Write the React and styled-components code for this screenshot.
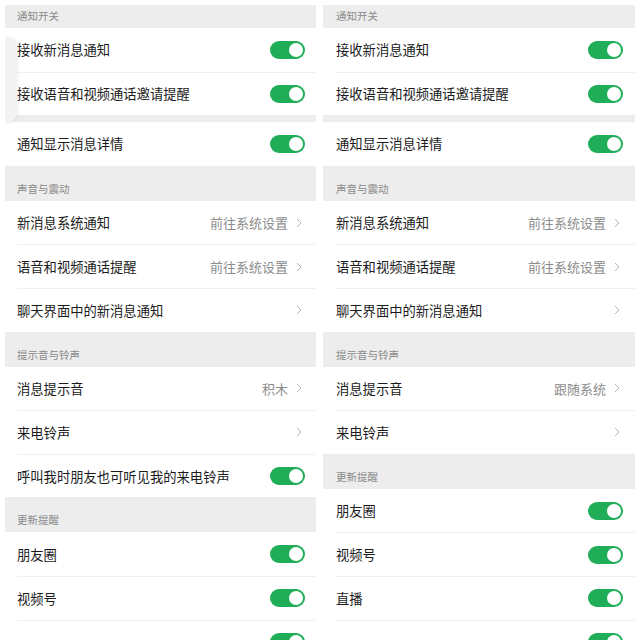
import React from "react";
import styled, { createGlobalStyle } from "styled-components";

const GlobalStyle = createGlobalStyle`
  html, body {
    margin: 0;
    padding: 0;
    background: #ffffff;
    font-family: "Noto Sans CJK SC", "Noto Sans", sans-serif;
  }
`;

const Page = styled.div`
  width: 640px;
  height: 640px;
  overflow: hidden;
  box-sizing: border-box;
  padding: 5px 5px 0 5px;
  display: grid;
  grid-template-columns: 311px 312px;
  column-gap: 7px;
  background: #ffffff;
`;

const Panel = styled.div`
  position: relative;
  display: flex;
  flex-direction: column;
  background: #ededed;
  overflow: hidden;
  height: 635px;
`;

const SectionHeader = styled.div`
  height: ${(p) => (p.$first ? 23 : 35)}px;
  flex-shrink: 0;
  box-sizing: border-box;
  display: flex;
  align-items: flex-end;
  padding: 0 0 5px ${(p) => p.$pad}px;
  font-size: 10.5px;
  color: #8a8a8a;
  line-height: 14px;
`;

const Gap = styled.div`
  height: 7px;
  flex-shrink: 0;
`;

const Group = styled.div`
  background: #ffffff;
  display: flex;
  flex-direction: column;
  flex-shrink: 0;
`;

const Row = styled.div`
  height: 43.6px;
  box-sizing: border-box;
  display: flex;
  align-items: center;
  margin-left: ${(p) => p.$pad}px;
  padding-right: ${(p) => p.$right}px;
  border-top: ${(p) => (p.$divider ? "1px solid #f0f0f0" : "none")};
`;

const Label = styled.span`
  flex: 1;
  font-size: 13.3px;
  color: #1b1b1b;
  white-space: nowrap;
`;

const Value = styled.span`
  font-size: 13px;
  color: #8c8c8c;
  margin-right: 8px;
`;

const Toggle = styled.div`
  position: relative;
  width: 35px;
  height: 18px;
  border-radius: 9px;
  background: #1fae57;
  &::after {
    content: "";
    position: absolute;
    right: 2px;
    top: 2px;
    width: 14px;
    height: 14px;
    border-radius: 50%;
    background: #ffffff;
  }
`;

const Chevron = styled.svg`
  width: 6px;
  height: 10px;
  margin-right: 3px;
  flex-shrink: 0;
`;

const BackHint = styled.div`
  position: absolute;
  left: 0;
  top: 32px;
  width: 12px;
  height: 86px;
  background: #f3f3f3;
  border-radius: 0 10px 10px 0;
  box-shadow: 1px 0 3px rgba(0, 0, 0, 0.08);
`;

const Arrow = () => (
  <Chevron viewBox="0 0 6 10">
    <polyline points="1,1 5,5 1,9" fill="none" stroke="#b5b5b5" strokeWidth="1" />
  </Chevron>
);

const Item = ({ label, value, toggle, arrow, divider, pad, right }) => (
  <Row $divider={divider} $pad={pad} $right={right}>
    <Label>{label}</Label>
    {value && <Value>{value}</Value>}
    {arrow && <Arrow />}
    {toggle && <Toggle />}
  </Row>
);

const renderGroup = (items, pad, right) => (
  <Group>
    {items.map((it, i) => (
      <Item key={i} {...it} divider={i > 0} pad={pad} right={right} />
    ))}
  </Group>
);

const SettingsPanel = ({ sections, pad, right, backHint }) => (
  <Panel>
    {sections.map((s, i) => (
      <React.Fragment key={i}>
        {s.title ? (
          <SectionHeader $first={i === 0} $pad={pad}>{s.title}</SectionHeader>
        ) : (
          <Gap />
        )}
        {renderGroup(s.items, pad, right)}
      </React.Fragment>
    ))}
    {backHint && <BackHint />}
  </Panel>
);

const notify = [
  {
    title: "通知开关",
    items: [
      { label: "接收新消息通知", toggle: true },
      { label: "接收语音和视频通话邀请提醒", toggle: true },
    ],
  },
  { title: null, items: [{ label: "通知显示消息详情", toggle: true }] },
  {
    title: "声音与震动",
    items: [
      { label: "新消息系统通知", value: "前往系统设置", arrow: true },
      { label: "语音和视频通话提醒", value: "前往系统设置", arrow: true },
      { label: "聊天界面中的新消息通知", arrow: true },
    ],
  },
];

const leftSections = [
  ...notify,
  {
    title: "提示音与铃声",
    items: [
      { label: "消息提示音", value: "积木", arrow: true },
      { label: "来电铃声", arrow: true },
      { label: "呼叫我时朋友也可听见我的来电铃声", toggle: true },
    ],
  },
  {
    title: "更新提醒",
    items: [
      { label: "朋友圈", toggle: true },
      { label: "视频号", toggle: true },
      { label: "", toggle: true },
    ],
  },
];

const rightSections = [
  ...notify,
  {
    title: "提示音与铃声",
    items: [
      { label: "消息提示音", value: "跟随系统", arrow: true },
      { label: "来电铃声", arrow: true },
    ],
  },
  {
    title: "更新提醒",
    items: [
      { label: "朋友圈", toggle: true },
      { label: "视频号", toggle: true },
      { label: "直播", toggle: true },
      { label: "", toggle: true },
    ],
  },
];

export default function App() {
  return (
    <>
      <GlobalStyle />
      <Page>
        <SettingsPanel sections={leftSections} pad={12} right={11} backHint />
        <SettingsPanel sections={rightSections} pad={13} right={12} />
      </Page>
    </>
  );
}
